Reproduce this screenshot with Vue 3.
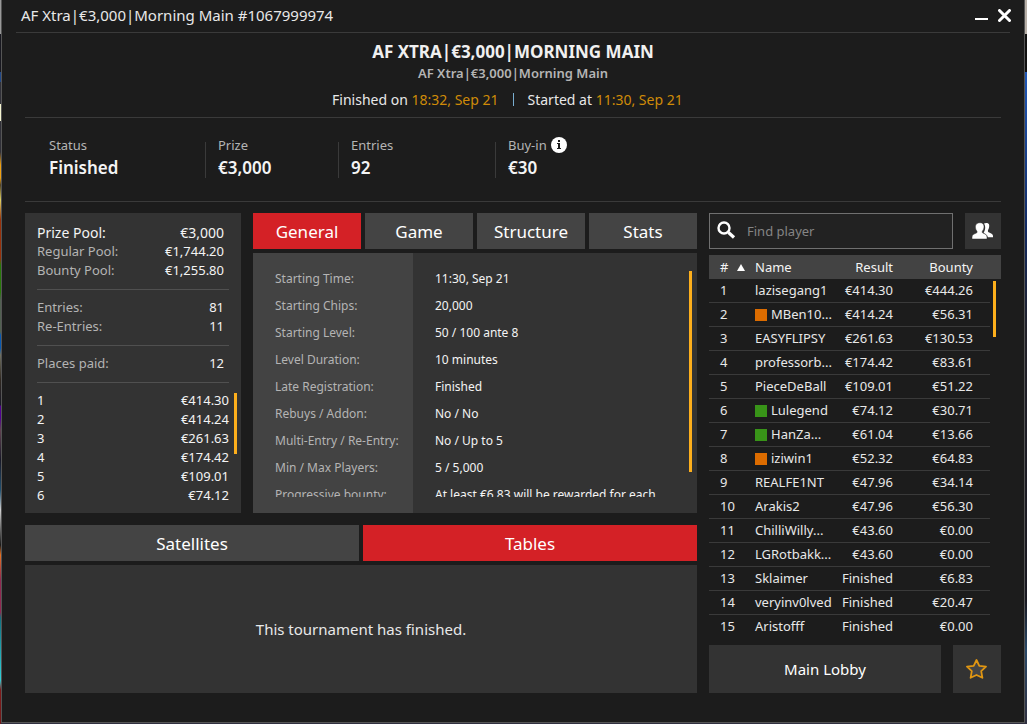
<script setup>
import { ref } from 'vue'

const activeTab = ref('General')
const activeLower = ref('Tables')
const query = ref('')
const tabs = ['General', 'Game', 'Structure', 'Stats']
const lowerTabs = ['Satellites', 'Tables']

const groups = [
  [['Prize Pool:', '€3,000', true], ['Regular Pool:', '€1,744.20'], ['Bounty Pool:', '€1,255.80']],
  [['Entries:', '81'], ['Re-Entries:', '11']],
  [['Places paid:', '12']]
]
const payouts = ['€414.30', '€414.24', '€261.63', '€174.42', '€109.01', '€74.12']

const details = [
  ['Starting Time:', '11:30, Sep 21'],
  ['Starting Chips:', '20,000'],
  ['Starting Level:', '50 / 100 ante 8'],
  ['Level Duration:', '10 minutes'],
  ['Late Registration:', 'Finished'],
  ['Rebuys / Addon:', 'No / No'],
  ['Multi-Entry / Re-Entry:', 'No / Up to 5'],
  ['Min / Max Players:', '5 / 5,000'],
  ['Progressive bounty:', 'At least €6.83 will be rewarded for each']
]

const players = [
  ['lazisegang1', '€414.30', '€444.26'],
  ['MBen10...', '€414.24', '€56.31', 'orange'],
  ['EASYFLIPSY', '€261.63', '€130.53'],
  ['professorb...', '€174.42', '€83.61'],
  ['PieceDeBall', '€109.01', '€51.22'],
  ['Lulegend', '€74.12', '€30.71', 'green'],
  ['HanZa...', '€61.04', '€13.66', 'green'],
  ['iziwin1', '€52.32', '€64.83', 'orange'],
  ['REALFE1NT', '€47.96', '€34.14'],
  ['Arakis2', '€47.96', '€56.30'],
  ['ChilliWilly...', '€43.60', '€0.00'],
  ['LGRotbakk...', '€43.60', '€0.00'],
  ['Sklaimer', 'Finished', '€6.83'],
  ['veryinv0lved', 'Finished', '€20.47'],
  ['Aristofff', 'Finished', '€0.00']
]
</script>

<template>
  <div class="desktop">
    <main class="window">
      <header class="titlebar">
        <span>AF Xtra|€3,000|Morning Main #1067999974</span>
        <div class="controls">
          <button type="button" aria-label="Minimize">
            <svg width="13" height="13" viewBox="0 0 13 13"><path d="M0 10h13" stroke="#fff" stroke-width="2" /></svg>
          </button>
          <button type="button" aria-label="Close">
            <svg width="13" height="13" viewBox="0 0 13 13"><path d="M1.5 1.5l10 10M11.5 1.5l-10 10" stroke="#fff" stroke-width="3" stroke-linecap="round" /></svg>
          </button>
        </div>
      </header>

      <div class="body">
        <section class="heading">
          <h1>AF XTRA|€3,000|MORNING MAIN</h1>
          <h2>AF Xtra|€3,000|Morning Main</h2>
          <p class="times">
            <span>Finished on <b>18:32, Sep 21</b></span>
            <i></i>
            <span>Started at <b>11:30, Sep 21</b></span>
          </p>
        </section>

        <dl class="facts">
          <div class="wide"><dt>Status</dt><dd>Finished</dd></div>
          <div><dt>Prize</dt><dd>€3,000</dd></div>
          <div class="wide"><dt>Entries</dt><dd>92</dd></div>
          <div>
            <dt>Buy-in
              <svg width="16" height="16" viewBox="0 0 16 16"><circle cx="8" cy="8" r="8" fill="#fff" /><path d="M7 3h2v2H7zM6 6h3v5h1v1H6v-1h1V7H6z" fill="#1c1c1c" /></svg>
            </dt>
            <dd>€30</dd>
          </div>
        </dl>

        <div class="columns">
          <div class="main">
            <div class="upper">
              <section class="panel pools">
                <dl v-for="(group, g) in groups" :key="g">
                  <div v-for="row in group" :key="row[0]" :class="{ strong: row[2] }">
                    <dt>{{ row[0] }}</dt><dd>{{ row[1] }}</dd>
                  </div>
                </dl>
                <ol>
                  <li v-for="(p, n) in payouts" :key="n"><span>{{ n + 1 }}</span><span>{{ p }}</span></li>
                </ol>
                <div class="thumb thumb-pools"></div>
              </section>

              <section class="info">
                <nav class="tabs">
                  <button v-for="t in tabs" :key="t" type="button" :class="{ active: t === activeTab }" @click="activeTab = t">{{ t }}</button>
                </nav>
                <div class="panel details">
                  <dl>
                    <div v-for="d in details" :key="d[0]"><dt>{{ d[0] }}</dt><dd>{{ d[1] }}</dd></div>
                  </dl>
                  <div class="thumb thumb-details"></div>
                </div>
              </section>
            </div>

            <section class="lower">
              <nav class="tabs">
                <button v-for="t in lowerTabs" :key="t" type="button" :class="{ active: t === activeLower }" @click="activeLower = t">{{ t }}</button>
              </nav>
              <div class="panel notice">This tournament has finished.</div>
            </section>
          </div>

          <aside class="players">
            <div class="search">
              <label class="field">
                <svg width="20" height="20" viewBox="0 0 20 20" fill="none" stroke="#fff"><circle cx="7" cy="7" r="5.5" stroke-width="2.4" /><path d="M11.5 11.5l5.5 5" stroke-width="3.2" /></svg>
                <input v-model="query" type="text" placeholder="Find player" aria-label="Find player">
              </label>
              <button type="button" class="people" aria-label="Players">
                <svg width="22" height="18" viewBox="0 0 22 18" fill="#fff">
                  <path d="M12 1.5c1-.7 4-1.200 5 .8.5 1.500.2 4-.8 5.500-.5.8-.4 1.800.3 2.400 2 1 4.500 1.500 4.500 3.800v1.300h-5.200c-.4-2.300-2-3.300-4.200-4.300.7-1.500 1.600-3 1.600-5.200 0-1.700-.4-3.200-1.200-4.300z" />
                  <path d="M8 .7c2.600 0 4 1.500 4 4 0 1.700-.6 3.300-1.600 4.300-.4 1-.2 1.800.5 2.100 2.400 1 4.100 1.700 4.100 4V17H0v-1.900c0-2.300 2-3 4.300-4 .8-.3 1-1.100.6-2.100-1-1-1.500-2.600-1.500-4.300 0-2.500 1.800-4 4.600-4z" stroke="#333" stroke-width=".5" />
                </svg>
              </button>
            </div>

            <div class="scroller">
              <table>
                <colgroup><col class="c-rank"><col><col class="c-result"><col class="c-bounty"><col class="c-end"></colgroup>
                <thead>
                  <tr>
                    <th scope="col"><span class="rank">#<svg width="8" height="7" viewBox="0 0 8 7"><path d="M4 0l4 7H0z" fill="#fff" /></svg></span></th>
                    <th scope="col">Name</th><th scope="col" class="num">Result</th><th scope="col" class="num">Bounty</th><td></td>
                  </tr>
                </thead>
                <tbody>
                  <tr v-for="(p, n) in players" :key="p[0]">
                    <td>{{ n + 1 }}</td>
                    <td><span class="name"><i v-if="p[3]" :class="p[3]"></i>{{ p[0] }}</span></td>
                    <td class="num">{{ p[1] }}</td>
                    <td class="num">{{ p[2] }}</td>
                    <td></td>
                  </tr>
                </tbody>
              </table>
              <div class="thumb thumb-players"></div>
            </div>

            <div class="actions">
              <button type="button" class="lobby">Main Lobby</button>
              <button type="button" class="star" aria-label="Favourite">
                <svg width="22" height="22" viewBox="0 0 22 22"><path d="M10.500 2l2.800 5.800 6.700.9-4.800 4.400 1.200 6.700-5.900-2.800-5.900 2.800 1.200-6.700L1 8.700l6.700-.9z" fill="#444" stroke="#e09612" stroke-width="1.800" stroke-linejoin="round" /></svg>
              </button>
            </div>
          </aside>
        </div>
      </div>
    </main>
  </div>
</template>

<style>
body { margin: 0; background: #1c1c1c; }
</style>

<style scoped>
* { box-sizing: border-box; }
.desktop {
  min-height: 100vh;
  padding: 0 2px 1px 1px;
  display: flex;
  font-family: "Noto Sans", "Open Sans", sans-serif;
  font-size: 13px;
  color: #e8e8e8;
  background:
    linear-gradient(#999 0 34px, #181820 34px 72px, #204888 72px 82px, #303038 82px 104px, #f4f4d0 104px 121px, #303038 121px 152px, #f0a010 165px 178px, #504020 185px, #e0d060 200px, #983008 220px 258px, #287808 265px 292px, #506050 300px 332px, #0858b0 335px 348px, #707060 355px, #302820 380px, #181828 405px, #500090 406px 418px, #604050 430px, #181828 460px, #205070 490px, #d0d0d0 510px, #181818 545px, #e87020 555px, #902850 580px 612px, #107080 618px, #30d0d8 680px, #801818 690px, #701818) left / 1px 100% no-repeat,
    linear-gradient(#b8b0a8 0 34px, #101010 34px 72px, #2058b8 72px, #102860 230px, #202028 330px, #181820 600px, #284868 650px, #303040) right / 2px 100% no-repeat,
    #303040;
}
.window { flex: 1; min-width: 0; background: #1c1c1c; border: 1px solid #555; border-top: 0; }
h1, h2, p, dl, dd, ol { margin: 0; padding: 0; }
button { border: 0; padding: 0; font: inherit; color: #fff; background: none; cursor: pointer; }
svg { display: block; flex: none; }

.titlebar { height: 33px; margin: 0 14px; padding: 0 0 2px 5px; border-bottom: 1px solid #3a3a3a; display: flex; align-items: center; justify-content: space-between; font-size: 15px; }
.controls { display: flex; gap: 10px; margin-right: -1px; }
.body { padding: 0 23px; }
.heading { height: 85px; padding-top: 8px; border-bottom: 1px solid #3a3a3a; text-align: center; }
h1 { font-size: 17px; line-height: 22px; color: #f0f0f0; font-weight: 700; }
h2 { font-size: 13px; line-height: 21px; color: #b4b4b4; font-weight: 600; }
.times { display: grid; grid-template-columns: 1fr 1px 1fr; column-gap: 14px; align-items: center; font-size: 14px; line-height: 31px; }
.times span:first-child { text-align: right; }
.times span:last-child { text-align: left; }
.times b { font-weight: 400; color: #cf8b08; }
.times i { height: 13px; background: #79aed0; }

.facts { height: 84px; padding: 17px 24px 0; border-bottom: 1px solid #3a3a3a; display: flex; }
.facts > div { position: relative; width: 133px; }
.facts > .wide { width: 157px; }
.facts > div:not(:last-child)::after { content: ""; position: absolute; right: 0; top: 7px; height: 36px; width: 1px; background: #3a3a3a; }
.facts > div + div { padding-left: 12px; }
dt { color: #b4b4b4; }
.facts dt { display: flex; align-items: center; gap: 4px; height: 20px; }
.facts dd { font-size: 17px; line-height: 26px; font-weight: 600; color: #f4f4f4; }

.columns { display: grid; grid-template-columns: minmax(0, 1fr) 292px; gap: 12px; padding: 11px 0 29px; }
.main { display: flex; flex-direction: column; gap: 12px; }
.upper { display: grid; grid-template-columns: 216px minmax(0, 1fr); gap: 12px; }
.panel { position: relative; background: #333; }
.pools { padding: 10px 12px 8px; }
.pools dl { padding-bottom: 9px; margin-bottom: 8px; border-bottom: 1px solid #505050; }
.pools dl > div { display: flex; justify-content: space-between; padding-right: 5px; line-height: 19px; }
.pools dl > .strong { font-size: 14px; }
.pools dd, .pools .strong dt { color: #f4f4f4; }
ol { list-style: none; }
ol li { display: flex; justify-content: space-between; line-height: 19px; color: #f4f4f4; }
.thumb { position: absolute; width: 3px; background: #fdaf1c; }
.thumb-pools { right: 4px; top: 180px; height: 61px; }
.thumb-details { right: 5px; top: 18px; height: 201px; }
.thumb-players { right: 5px; top: 26px; height: 56px; }

.tabs { display: flex; gap: 4px; margin-bottom: 4px; }
.tabs button { flex: 1; height: 36px; background: #444; font-size: 17px; }
.tabs .active { background: #d42126; }
.details { padding: 12px 22px 16px; background: linear-gradient(to right, #434343 160px, #333 160px); }
.details dl { height: 232px; overflow: hidden; line-height: 27px; font-size: 12px; }
.details dl > div { display: grid; grid-template-columns: 160px minmax(0, 1fr); white-space: nowrap; }
.details dd { color: #f4f4f4; }
.notice { min-height: 128px; display: flex; align-items: center; justify-content: center; font-size: 15px; }

.players { display: flex; flex-direction: column; }
.search { display: flex; gap: 12px; margin-bottom: 6px; }
.field { flex: 1; min-width: 0; height: 36px; display: flex; align-items: center; gap: 10px; padding: 0 7px; border: 1px solid #707070; background: #222; }
.field input { flex: 1; min-width: 0; border: 0; outline: 0; padding: 0; background: none; color: #fff; font: inherit; }
.field input::placeholder { color: #858585; opacity: 1; }
.people { width: 36px; height: 36px; display: grid; place-items: center; background: #333; }
.scroller { position: relative; }
table { width: 100%; table-layout: fixed; border-collapse: separate; border-spacing: 0; }
.c-rank { width: 46px; }
.c-result { width: 60px; }
.c-bounty { width: 97px; }
.c-end { width: 11px; }
th, td { height: 24px; padding: 0; line-height: 23px; text-align: left; font-weight: 400; white-space: nowrap; }
th:first-child, td:first-child { padding-left: 11px; }
thead { background: #434343; color: #f4f4f4; }
tbody td:not(:last-child) { border-bottom: 1px solid #3a3a3a; }
tbody tr:last-child td { border-bottom-color: transparent; }
.num { text-align: right; }
th.num + .num, td.num + .num { padding-right: 17px; }
.rank { display: flex; align-items: center; gap: 9px; }
.name { display: flex; align-items: center; gap: 4px; }
.name i { width: 12px; height: 12px; }
.orange { background: #dc6c00; }
.green { background: #389418; }
.actions { display: flex; gap: 12px; margin-top: 6px; }
.actions button { height: 48px; background: #333; }
.actions .lobby { flex: 1; font-size: 15px; }
.actions .star { width: 48px; display: grid; place-items: center; }
</style>
